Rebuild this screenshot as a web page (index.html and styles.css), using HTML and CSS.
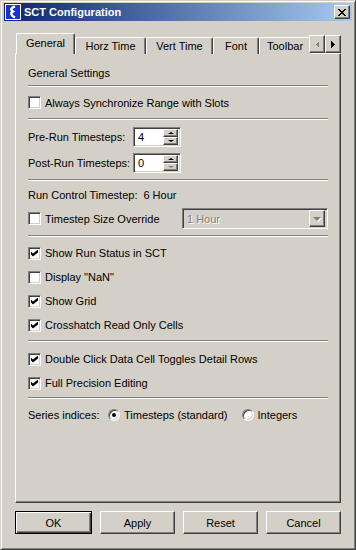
FILE: index.html
```html
<!DOCTYPE html>
<html lang="en">
<head>
    <meta charset="UTF-8">
    <title>SCT Configuration</title>
    <link rel="stylesheet" href="styles.css">
</head>
<body>
<div class="window">
    <div class="titlebar">
        <svg class="app-icon" width="16" height="16" viewBox="0 0 16 16">
            <rect x="0.5" y="0.5" width="15" height="15" fill="#1a2fd6" stroke="#ffffff"/>
            <path d="M10 2.5 C6 3.5 5 5.5 8 7.5 C5 9 6 11.5 10 13.5" fill="none" stroke="#ffffff" stroke-width="2.4"/>
        </svg>
        <span class="title">SCT Configuration</span>
        <div class="close-btn">
            <svg width="8" height="7" viewBox="0 0 8 7" shape-rendering="crispEdges">
                <path d="M0 0h2v1h-2z M6 0h2v1h-2z M1 1h2v1h-2z M5 1h2v1h-2z M2 2h4v1h-4z M3 3h2v1h-2z M2 4h4v1h-4z M1 5h2v1h-2z M5 5h2v1h-2z M0 6h2v1h-2z M6 6h2v1h-2z" fill="#000"/>
            </svg>
        </div>
    </div>

    <div class="dialog-body">
        <div class="tabs">
            <div class="tab-strip">
                <div class="tab active tab-general">General</div>
                <div class="tab tab-horz">Horz Time</div>
                <div class="tab tab-vert">Vert Time</div>
                <div class="tab tab-font">Font</div>
                <div class="tab tab-toolbar">Toolbar</div>
            </div>
            <div class="tab-scroll">
                <div class="scroll-btn">
                    <svg width="4" height="7" viewBox="0 0 4 7" shape-rendering="crispEdges">
                        <path d="M4 0v7L0.5 3.5z" fill="#808080"/>
                    </svg>
                </div>
                <div class="scroll-btn">
                    <svg width="4" height="7" viewBox="0 0 4 7" shape-rendering="crispEdges">
                        <path d="M0 0v7L3.5 3.5z" fill="#000"/>
                    </svg>
                </div>
            </div>
        </div>

        <div class="panel">
            <div class="heading">General Settings</div>
            <div class="sep sep-1"></div>

            <div class="check-row row-sync">
                <span class="checkbox"></span>
                <span>Always Synchronize Range with Slots</span>
            </div>
            <div class="sep"></div>

            <div class="spin-row spin-pre">
                <span class="field-label">Pre-Run Timesteps:</span>
                <div class="spinner">
                    <span class="spin-value">4</span>
                    <div class="spin-buttons">
                        <div class="spin-btn"><span class="arrow-up"></span></div>
                        <div class="spin-btn"><span class="arrow-down"></span></div>
                    </div>
                </div>
            </div>
            <div class="spin-row spin-post">
                <span class="field-label">Post-Run Timesteps:</span>
                <div class="spinner">
                    <span class="spin-value">0</span>
                    <div class="spin-buttons">
                        <div class="spin-btn"><span class="arrow-up"></span></div>
                        <div class="spin-btn"><span class="arrow-down disabled"></span></div>
                    </div>
                </div>
            </div>
            <div class="sep sep-3"></div>

            <div class="text-row">
                <span>Run Control Timestep:</span>
                <span class="step-value">6 Hour</span>
            </div>
            <div class="combo-row">
                <div class="check-label">
                    <span class="checkbox"></span>
                    <span>Timestep Size Override</span>
                </div>
                <div class="combo">
                    <span class="combo-text">1 Hour</span>
                    <div class="combo-btn"><span class="arrow-down combo-arrow"></span></div>
                </div>
            </div>
            <div class="sep sep-3"></div>

            <div class="check-group group-view">
                <div class="check-row">
                    <span class="checkbox checked"></span>
                    <span>Show Run Status in SCT</span>
                </div>
                <div class="check-row">
                    <span class="checkbox"></span>
                    <span>Display "NaN"</span>
                </div>
                <div class="check-row">
                    <span class="checkbox checked"></span>
                    <span>Show Grid</span>
                </div>
                <div class="check-row">
                    <span class="checkbox checked"></span>
                    <span>Crosshatch Read Only Cells</span>
                </div>
            </div>
            <div class="sep sep-4"></div>

            <div class="check-group group-edit">
                <div class="check-row">
                    <span class="checkbox checked"></span>
                    <span>Double Click Data Cell Toggles Detail Rows</span>
                </div>
                <div class="check-row">
                    <span class="checkbox checked"></span>
                    <span>Full Precision Editing</span>
                </div>
            </div>
            <div class="sep sep-5"></div>

            <div class="radio-row">
                <span class="radio-label">Series indices:</span>
                <span class="radio selected"></span>
                <span class="radio-text">Timesteps (standard)</span>
                <span class="radio"></span>
                <span class="radio-text">Integers</span>
            </div>
        </div>

        <div class="buttons">
            <div class="btn default">OK</div>
            <div class="btn">Apply</div>
            <div class="btn">Reset</div>
            <div class="btn">Cancel</div>
        </div>
    </div>
</div>
</body>
</html>
```

FILE: styles.css
```css
body {
    margin: 0;
    padding: 0;
    background-color: #d4d0c8;
    font-family: "Liberation Sans", Arial, sans-serif;
    font-size: 11px;
    color: #000;
}
.window {
    width: 356px;
    height: 550px;
    box-sizing: border-box;
    background-color: #d4d0c8;
    border: 1px solid;
    border-color: #d4d0c8 #404040 #404040 #d4d0c8;
    box-shadow: inset 1px 1px #fff, inset -1px -1px #808080;
    padding: 2px 3px 3px 3px;
}

/* title bar */
.titlebar {
    height: 18px;
    display: flex;
    align-items: center;
    background: linear-gradient(to right, #0a246a, #a6caf0);
    padding: 0 2px 0 1px;
}
.app-icon {
    display: block;
    flex: none;
}
.title {
    color: #fff;
    font-weight: bold;
    margin-left: 3px;
    flex: 1;
}
.close-btn {
    width: 16px;
    height: 14px;
    box-sizing: border-box;
    border: 1px solid;
    border-color: #fff #404040 #404040 #fff;
    box-shadow: inset -1px -1px #808080;
    background-color: #d4d0c8;
    display: flex;
    align-items: center;
    justify-content: center;
}
.close-btn svg {
    display: block;
}

.dialog-body {
    margin: 0 11px;
}

/* tabs */
.tabs {
    position: relative;
    margin-top: 12px;
    height: 20px;
    z-index: 1;
}
.tab-strip {
    display: flex;
    align-items: flex-end;
    width: 294px;
    height: 21px;
    overflow: hidden;
    padding-left: 1px;
}
.tab {
    height: 17px;
    box-sizing: border-box;
    flex: none;
    border-top: 1px solid #fff;
    border-left: 1px solid #fff;
    border-right: 1px solid #404040;
    box-shadow: inset -1px 0 #808080;
    border-radius: 2px 2px 0 0;
    background-color: #d4d0c8;
    display: flex;
    align-items: center;
    justify-content: center;
    padding-bottom: 1px;
}
.tab.active {
    height: 21px;
    padding-bottom: 2px;
}
.tab-general { width: 59px; }
.tab-horz { width: 71px; }
.tab-vert { width: 67px; }
.tab-font { width: 46px; }
.tab-toolbar { width: 60px; justify-content: flex-start; padding-left: 7px; }

.tab-scroll {
    position: absolute;
    left: 294px;
    top: 2px;
    display: flex;
}
.scroll-btn {
    width: 16px;
    height: 18px;
    box-sizing: border-box;
    border: 1px solid;
    border-color: #fff #404040 #404040 #fff;
    box-shadow: inset -1px -1px #808080;
    background-color: #d4d0c8;
    display: flex;
    align-items: center;
    justify-content: center;
}
.scroll-btn svg {
    display: block;
}

/* panel */
.panel {
    height: 450px;
    box-sizing: border-box;
    border: 1px solid;
    border-color: #fff #404040 #404040 #fff;
    box-shadow: inset -1px -1px #808080;
    padding-left: 12px;
}
.heading {
    height: 18px;
    line-height: 18px;
    margin-top: 10px;
}
.sep {
    width: 300px;
    height: 0;
    border-top: 1px solid #808080;
    border-bottom: 1px solid #fff;
}
.sep-1 { margin-top: 3px; }
.sep-3 { margin-top: 6px; }
.sep-4 { margin-top: 3px; }
.sep-5 { margin-top: 2px; }

.check-row {
    height: 24px;
    display: flex;
    align-items: center;
}
.row-sync {
    height: 31px;
}
.checkbox {
    width: 13px;
    height: 13px;
    box-sizing: border-box;
    border: 1px solid;
    border-color: #808080 #fff #fff #808080;
    box-shadow: inset 1px 1px #404040, inset -1px -1px #d4d0c8;
    background-color: #fff;
    margin-right: 4px;
    flex: none;
    position: relative;
}
.checkbox.checked::after {
    content: "";
    position: absolute;
    left: 2px;
    top: 2px;
    width: 7px;
    height: 7px;
    background: #000;
    clip-path: polygon(0 28%, 28% 57%, 100% 0, 100% 43%, 28% 100%, 0 71%);
}

.spin-row {
    height: 20px;
    display: flex;
    align-items: center;
    margin-top: 6px;
}
.spin-pre {
    margin-top: 7px;
}
.field-label {
    width: 105px;
}
.spinner {
    width: 48px;
    height: 20px;
    box-sizing: border-box;
    border: 1px solid;
    border-color: #808080 #fff #fff #808080;
    box-shadow: inset 1px 1px #404040, inset -1px -1px #d4d0c8;
    background-color: #fff;
    display: flex;
    align-items: center;
    padding: 2px 2px 2px 4px;
}
.spin-value {
    flex: 1;
}
.spin-buttons {
    display: flex;
    flex-direction: column;
    width: 15px;
    height: 16px;
}
.spin-btn {
    flex: 1;
    box-sizing: border-box;
    border: 1px solid;
    border-color: #fff #404040 #404040 #fff;
    box-shadow: inset -1px -1px #808080;
    background-color: #d4d0c8;
    display: flex;
    align-items: center;
    justify-content: center;
}
.arrow-up {
    width: 0;
    height: 0;
    border-left: 3px solid transparent;
    border-right: 3px solid transparent;
    border-bottom: 2px solid #000;
}
.arrow-down {
    width: 0;
    height: 0;
    border-left: 3px solid transparent;
    border-right: 3px solid transparent;
    border-top: 2px solid #000;
}
.arrow-down.disabled {
    border-top-color: #808080;
}

.text-row {
    height: 27px;
    display: flex;
    align-items: center;
}
.step-value {
    margin-left: 6px;
}
.combo-row {
    height: 21px;
    display: flex;
    align-items: center;
}
.check-label {
    width: 154px;
    display: flex;
    align-items: center;
}
.combo {
    width: 146px;
    height: 21px;
    box-sizing: border-box;
    border: 1px solid;
    border-color: #808080 #fff #fff #808080;
    box-shadow: inset 1px 1px #404040, inset -1px -1px #d4d0c8;
    background-color: #d4d0c8;
    display: flex;
    align-items: center;
    padding: 2px;
}
.combo-text {
    flex: 1;
    color: #808080;
    text-shadow: 1px 1px #fff;
    padding-left: 2px;
}
.combo-btn {
    width: 16px;
    height: 17px;
    box-sizing: border-box;
    border: 1px solid;
    border-color: #fff #404040 #404040 #fff;
    box-shadow: inset -1px -1px #808080;
    display: flex;
    align-items: center;
    justify-content: center;
}
.combo-arrow {
    border-left-width: 4px;
    border-right-width: 4px;
    border-top: 4px solid #808080;
    filter: drop-shadow(1px 1px 0 #fff);
}

.group-view {
    margin-top: 4px;
}
.group-edit {
    margin-top: 5px;
}

.radio-row {
    height: 24px;
    margin-top: 4px;
    display: flex;
    align-items: center;
}
.radio-label {
    width: 80px;
}
.radio {
    width: 12px;
    height: 12px;
    box-sizing: border-box;
    border-radius: 50%;
    border: 1px solid;
    border-color: #808080 #fff #fff #808080;
    box-shadow: inset 1px 1px #404040, inset -1px -1px #d4d0c8;
    background-color: #fff;
    margin-right: 4px;
    flex: none;
    position: relative;
}
.radio.selected::after {
    content: "";
    position: absolute;
    left: 3px;
    top: 3px;
    width: 4px;
    height: 4px;
    border-radius: 50%;
    background: #000;
}
.radio-text {
    margin-right: 14px;
}

/* bottom buttons */
.buttons {
    display: flex;
    justify-content: space-between;
    margin-top: 8px;
}
.btn {
    width: 75px;
    height: 23px;
    box-sizing: border-box;
    border: 1px solid;
    border-color: #fff #404040 #404040 #fff;
    box-shadow: inset -1px -1px #808080;
    background-color: #d4d0c8;
    display: flex;
    align-items: center;
    justify-content: center;
}
.btn.default {
    width: 77px;
    border: 1px solid #000;
    box-shadow: inset 1px 1px #fff, inset -1px -1px #404040, inset -2px -2px #808080;
}
```
